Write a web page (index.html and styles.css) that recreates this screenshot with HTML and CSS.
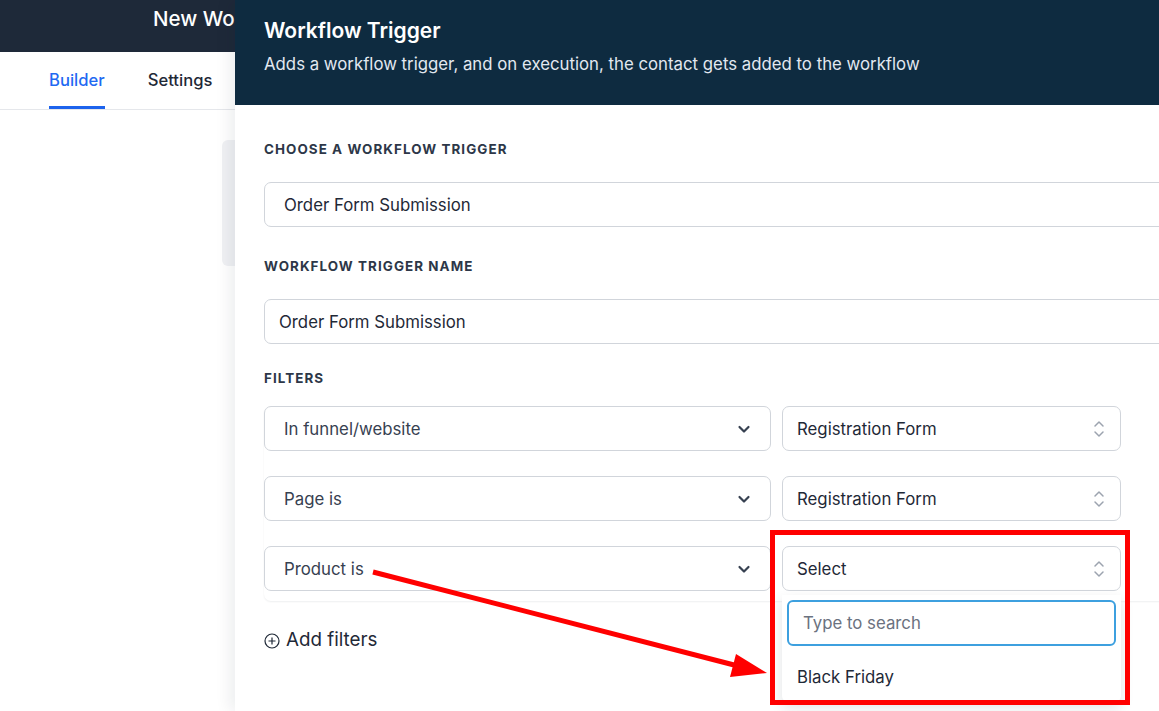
FILE: index.html
```html
<!DOCTYPE html>
<html lang="en">
<head>
<meta charset="utf-8">
<title>Workflow Trigger</title>
<link rel="stylesheet" href="styles.css">
</head>
<body>
<div class="app">
  <header class="topbar"><span class="wf-name">New Workflow</span></header>
  <nav class="tabs">
    <a class="tab active">Builder</a>
    <a class="tab">Settings</a>
  </nav>
  <main class="canvas">
    <div class="canvas-card"></div>
  </main>

  <aside class="drawer">
    <div class="drawer-head">
      <h1 class="drawer-title">Workflow Trigger</h1>
      <p class="drawer-sub">Adds a workflow trigger, and on execution, the contact gets added to the workflow</p>
    </div>
    <div class="drawer-body">
      <div class="label">Choose a workflow trigger</div>
      <div class="field field-choose">Order Form Submission</div>

      <div class="label label-gap">Workflow trigger name</div>
      <div class="field field-name">Order Form Submission</div>

      <div class="label label-gap2">Filters</div>
      <div class="filters">
        <div class="filter-row">
          <div class="select select-left"><span>In funnel/website</span>
            <svg class="chev" width="14" height="14" viewBox="0 0 14 14"><path d="M2.5 5 L7 9.5 L11.5 5" fill="none" stroke="#374151" stroke-width="2.2" stroke-linecap="round" stroke-linejoin="round"/></svg>
          </div>
          <div class="select select-right"><span>Registration Form</span>
            <svg class="updown" width="12" height="20" viewBox="0 0 12 20"><path d="M2 7 L6 3 L10 7 M2 13 L6 17 L10 13" fill="none" stroke="#9ca3af" stroke-width="1.5" stroke-linecap="round" stroke-linejoin="round"/></svg>
          </div>
        </div>
        <div class="filter-row">
          <div class="select select-left"><span>Page is</span>
            <svg class="chev" width="14" height="14" viewBox="0 0 14 14"><path d="M2.5 5 L7 9.5 L11.5 5" fill="none" stroke="#374151" stroke-width="2.2" stroke-linecap="round" stroke-linejoin="round"/></svg>
          </div>
          <div class="select select-right"><span>Registration Form</span>
            <svg class="updown" width="12" height="20" viewBox="0 0 12 20"><path d="M2 7 L6 3 L10 7 M2 13 L6 17 L10 13" fill="none" stroke="#9ca3af" stroke-width="1.5" stroke-linecap="round" stroke-linejoin="round"/></svg>
          </div>
        </div>
        <div class="filter-row">
          <div class="select select-left"><span>Product is</span>
            <svg class="chev" width="14" height="14" viewBox="0 0 14 14"><path d="M2.5 5 L7 9.5 L11.5 5" fill="none" stroke="#374151" stroke-width="2.2" stroke-linecap="round" stroke-linejoin="round"/></svg>
          </div>
          <div class="select select-right open"><span>Select</span>
            <svg class="updown" width="12" height="20" viewBox="0 0 12 20"><path d="M2 7 L6 3 L10 7 M2 13 L6 17 L10 13" fill="none" stroke="#9ca3af" stroke-width="1.5" stroke-linecap="round" stroke-linejoin="round"/></svg>
            <div class="dropdown">
              <div class="search">Type to search</div>
              <div class="option">Black Friday</div>
            </div>
          </div>
        </div>
      </div>

      <div class="add-filters">
        <svg width="16" height="16" viewBox="0 0 16 16"><circle cx="8" cy="8" r="7" fill="none" stroke="#1f2937" stroke-width="1.2"/><path d="M8 4.5 V11.5 M4.5 8 H11.5" stroke="#1f2937" stroke-width="1.2"/></svg>
        <span>Add filters</span>
      </div>
    </div>
  </aside>

  <div class="highlight"></div>
  <svg class="arrow" width="1159" height="711" viewBox="0 0 1159 711">
    <line x1="373" y1="572" x2="738" y2="666" stroke="#ff0000" stroke-width="5"/>
    <polygon points="736,654 730,677 767,673" fill="#ff0000"/>
  </svg>
</div>
</body>
</html>
```

FILE: styles.css
```css
* { box-sizing: border-box; }
html, body { margin: 0; padding: 0; }
body {
  font-family: Inter, "Noto Sans", "Liberation Sans", sans-serif;
  background: #ffffff;
  color: #1f2937;
}
.app {
  position: relative;
  width: 1159px;
  height: 711px;
  overflow: hidden;
  background: #ffffff;
}
.topbar {
  height: 52px;
  background: #1e2939;
  padding-left: 153px;
  display: flex;
  align-items: center;
  padding-bottom: 16px;
}
.wf-name {
  color: #ffffff;
  font-size: 20.5px;
  font-weight: 500;
  white-space: nowrap;
  width: 82px;
  overflow: hidden;
}
.tabs {
  height: 58px;
  border-bottom: 1px solid #e5e7eb;
  display: flex;
  padding-left: 49px;
  gap: 43px;
}
.tab {
  font-size: 16.6px;
  font-weight: 500;
  color: #1f2937;
  display: flex;
  align-items: center;
  height: 57px;
  border-bottom: 3px solid transparent;
  padding-top: 1px;
}
.tab.active {
  color: #1f6af2;
  border-bottom-color: #1d63ed;
}
.canvas {
  padding-top: 30px;
}
.canvas-card {
  margin-left: 222px;
  width: 60px;
  height: 126px;
  background: #f0f1f4;
  border-radius: 6px;
}

.drawer {
  position: absolute;
  top: 0;
  left: 235px;
  width: 960px;
  height: 711px;
  background: #ffffff;
  box-shadow: -6px 0 14px rgba(15, 23, 42, 0.07);
}
.drawer-head {
  height: 105px;
  background: #0e2b40;
  padding: 17px 29px 0;
}
.drawer-title {
  margin: 0;
  color: #ffffff;
  font-size: 21px;
  font-weight: 600;
  line-height: 28px;
}
.drawer-sub {
  margin: 8px 0 0;
  color: #e2e8f0;
  font-size: 16.8px;
  line-height: 22px;
  white-space: nowrap;
}
.drawer-body {
  padding: 36px 29px 0;
}
.label {
  font-size: 13.4px;
  font-weight: 700;
  text-transform: uppercase;
  letter-spacing: 0.08em;
  color: #2d3748;
  line-height: 16px;
}
.field {
  margin-top: 25px;
  height: 45px;
  border: 1px solid #d1d5db;
  border-radius: 7px;
  display: flex;
  align-items: center;
  font-size: 16.8px;
  color: #1f2937;
}
.field-choose { padding-left: 19px; }
.field-name { padding-left: 14px; }
.label-gap { margin-top: 31px; }
.label-gap2 { margin-top: 26px; }

.filters {
  margin-top: 20px;
  display: flex;
  flex-direction: column;
  gap: 25px;
  padding-bottom: 10px;
  border-radius: 7px;
  box-shadow: 0 1px 2px rgba(15, 23, 42, 0.07);
}
.filter-row {
  display: flex;
  gap: 11px;
}
.select {
  position: relative;
  height: 45px;
  border: 1px solid #d1d5db;
  border-radius: 7px;
  display: flex;
  align-items: center;
  justify-content: space-between;
  font-size: 16.8px;
}
.select-left {
  width: 507px;
  padding: 0 19px 0 19px;
  color: #374151;
}
.select-right {
  width: 339px;
  padding: 0 15px 0 14px;
  color: #1f2937;
}
.chev { display: block; }
.updown { display: block; }
.dropdown {
  position: absolute;
  top: 48px;
  left: -1px;
  width: 339px;
  background: #ffffff;
  padding: 5px 5px 0;
  box-shadow: 0 6px 14px rgba(15, 23, 42, 0.12);
  border-radius: 0 0 6px 6px;
  z-index: 2;
}
.search {
  height: 46px;
  border: 2px solid #3da0df;
  border-radius: 6px;
  display: flex;
  align-items: center;
  padding-left: 14px;
  color: #6b7280;
  font-size: 16.8px;
}
.option {
  height: 56px;
  padding-top: 6px;
  display: flex;
  align-items: center;
  padding-left: 10px;
  font-size: 16.8px;
  color: #1f2937;
}
.add-filters {
  margin-top: 28px;
  display: flex;
  align-items: center;
  gap: 6px;
  font-size: 18.8px;
  color: #1f2937;
  line-height: 22px;
}
.add-filters svg { display: block; margin-top: 2px; }

.highlight {
  position: absolute;
  left: 770px;
  top: 530px;
  width: 360px;
  height: 175px;
  border: 5px solid #ff0000;
  z-index: 5;
}
.arrow {
  position: absolute;
  left: 0;
  top: 0;
  z-index: 6;
  pointer-events: none;
}
```
